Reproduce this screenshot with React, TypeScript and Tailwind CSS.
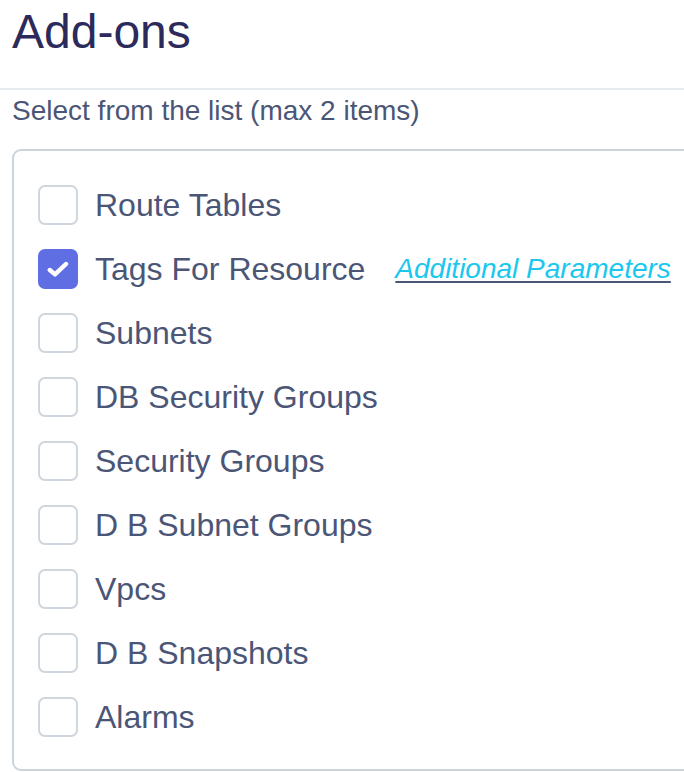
import { useState } from "react";

const ITEMS = [
  "Route Tables",
  "Tags For Resource",
  "Subnets",
  "DB Security Groups",
  "Security Groups",
  "D B Subnet Groups",
  "Vpcs",
  "D B Snapshots",
  "Alarms",
];

function Checkbox({ checked, onToggle }: { checked: boolean; onToggle: () => void }) {
  return (
    <button
      type="button"
      onClick={onToggle}
      className={`w-[40px] h-[40px] shrink-0 rounded-[7px] flex items-center justify-center ${
        checked ? "bg-[#5f6fe3]" : "border-2 border-[#d0d6de] bg-white"
      }`}
    >
      {checked && (
        <svg width="22" height="17" viewBox="0 0 22 17" fill="none" className="mt-[1px]">
          <path d="M2.8 9 L8 13.4 L19 3" stroke="white" strokeWidth="4.4" strokeLinecap="round" strokeLinejoin="round" />
        </svg>
      )}
    </button>
  );
}

export default function App() {
  const [selected, setSelected] = useState<string[]>(["Tags For Resource"]);

  const toggle = (name: string) =>
    setSelected((s) => (s.includes(name) ? s.filter((x) => x !== name) : s.length < 2 ? [...s, name] : s));

  return (
    <div className="w-[684px] h-[772px] overflow-hidden bg-white font-['Liberation_Sans',Arial,sans-serif]">
      {/* Header */}
      <div className="h-[88px] px-[12px] pt-[4px]">
        <h1 className="text-[48px] leading-[56px] text-[#2c2a5c]">Add-ons</h1>
      </div>
      <div className="h-[2px] bg-[#e6eaef]" />

      <p className="px-[12px] pt-[3px] text-[28px] leading-[36px] text-[#4b5677]">
        Select from the list (max 2 items)
      </p>

      {/* List box */}
      <div className="ml-[12px] mt-[20px] w-[700px] h-[622px] border-2 border-[#ccd3db] rounded-[9px] pl-[24px] pt-[34px]">
        <ul className="flex flex-col gap-[24px]">
          {ITEMS.map((name) => {
            const checked = selected.includes(name);
            return (
              <li key={name} className="flex items-center h-[40px]">
                <Checkbox checked={checked} onToggle={() => toggle(name)} />
                <span className="ml-[17px] text-[32px] leading-[40px] text-[#4b5677] whitespace-nowrap">
                  {name}
                </span>
                {checked && name === "Tags For Resource" && (
                  <a
                    href="#"
                    className="ml-[30px] italic text-[28px] leading-[40px] text-[#1ac8ee] underline decoration-[#4b5677] underline-offset-[3px] whitespace-nowrap"
                  >
                    Additional Parameters
                  </a>
                )}
              </li>
            );
          })}
        </ul>
      </div>
    </div>
  );
}
